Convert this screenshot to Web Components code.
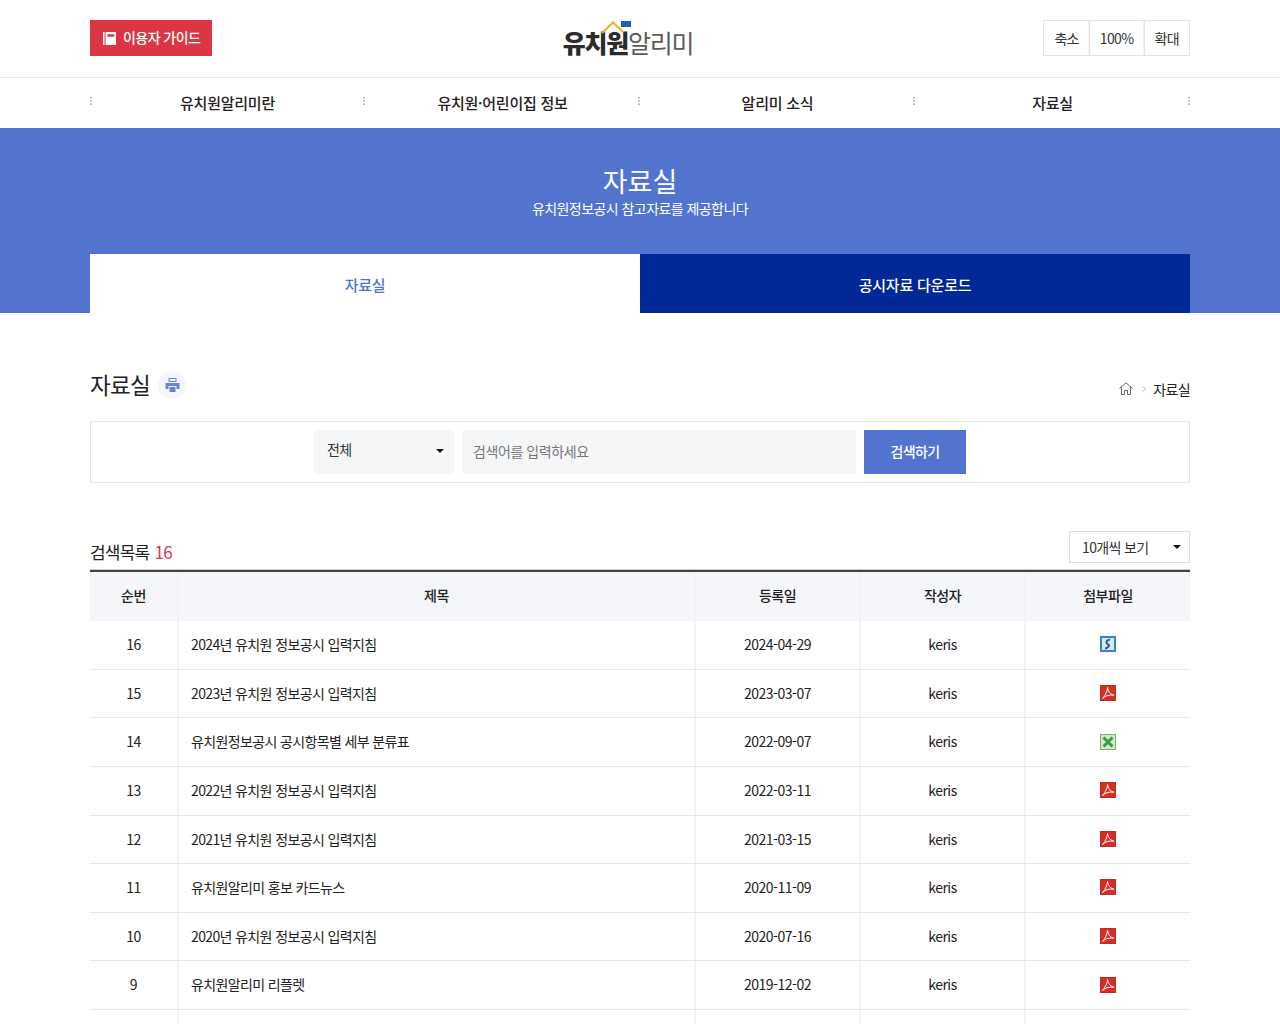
<!DOCTYPE html>
<html lang="ko"><head><meta charset="utf-8"><title>자료실</title>
<style>
html,body{margin:0;padding:0;background:#fff;color:#222;font-family:"Noto Sans CJK KR","Noto Sans",sans-serif;overflow:hidden;height:1024px}
</style></head><body>
<site-header></site-header>
<site-nav></site-nav>
<page-banner></page-banner>
<main-title></main-title>
<search-box></search-box>
<list-head></list-head>
<data-table></data-table>
<script>
const base=':host{display:block;box-sizing:border-box;letter-spacing:-.04em}*{box-sizing:border-box}';
function def(name,html){customElements.define(name,class extends HTMLElement{constructor(){super();this.attachShadow({mode:'open'}).innerHTML='<style>'+base+html[0]+'</style>'+html[1]}})}
def('site-header',[`
:host{height:78px;border-bottom:1px solid #e8e8e8;padding:20px 90px 0}
.w{display:grid;grid-template-columns:1fr auto 1fr;align-items:start}
.g{width:122px;height:36px;background:#dc3545;color:#fff;font-size:14px;display:flex;align-items:center;gap:7px;padding-left:13px;font-weight:500;letter-spacing:-.04em;line-height:35px}
.g span{margin-top:-1px}
.logo{position:relative;font-size:25px;line-height:36px;height:36px;margin:4px 24px 0 0;letter-spacing:-.05em;color:#5c5c5c;font-weight:400;white-space:nowrap}
.logo b{color:#2b2b2b;font-weight:900}
.logo svg{position:absolute;left:38px;top:-4px}
.z{justify-self:end;display:flex;height:36px;border:1px solid #e4e4e4;font-size:14px;line-height:35px;color:#333}
.z span{padding:0 10px;border-left:1px solid #e4e4e4;box-shadow:-1px 0 0 #f3f3f3}
.z span:first-child{border:0;box-shadow:none}
`,`<div class="w"><div class="g"><svg width="13" height="13" viewBox="0 0 12 12"><path fill="#fff" d="M0 0h1.400v12H0zM2.400 0H12v12H2.400zM4 2v2.400h6.400V2z"/></svg><span>이용자 가이드</span></div>
<div class="logo"><svg width="32" height="16" viewBox="0 0 32 16"><path d="M1 13 L12 2.500 L22 12" fill="none" stroke="#f0b429" stroke-width="2.200"/><path d="M20 1h10v6H20z" fill="#1f5fbf"/></svg><b>유치원</b>알리미</div>
<div class="z"><span>축소</span><span>100%</span><span>확대</span></div></div>`]);
def('site-nav',[`
:host{height:50px;padding:0 90px}
.n{display:grid;grid-template-columns:repeat(4,275px);height:50px;letter-spacing:-.015em}
.n a{position:relative;text-align:center;font-size:15px;font-weight:500;line-height:50px;color:#222}
.n a::before{content:"";position:absolute;left:-2px;top:18px;width:2px;height:10px;background:radial-gradient(circle,#bbb 0 .9px,transparent 1px) 0 0/2px 3.300px}
.n a:first-child::before{left:0}
.n a:last-child::after{content:"";position:absolute;right:0;top:18px;width:2px;height:10px;background:radial-gradient(circle,#bbb 0 .9px,transparent 1px) 0 0/2px 3.300px}
`,`<div class="n"><a>유치원알리미란</a><a>유치원·어린이집 정보</a><a>알리미 소식</a><a>자료실</a></div>`]);
def('page-banner',[`
:host{height:185px;background:#5274cf;color:#fff;text-align:center;padding-top:33px}
h1{margin:0;font-size:27px;font-weight:400;line-height:40px;letter-spacing:0}
p{margin:-5px 0 0;font-size:14px;line-height:24px;letter-spacing:-.04em}
.t{display:grid;grid-template-columns:550px 550px;grid-template-rows:59px;margin:34px 90px 0;height:59px;font-size:15px;font-weight:500;letter-spacing:-.015em}
.t a{display:flex;align-items:center;justify-content:center;padding-top:2px}
.t a:first-child{background:#fff;color:#5274cf}.t a:last-child{background:#002896;color:#fff}
`,`<h1>자료실</h1><p>유치원정보공시 참고자료를 제공합니다</p><div class="t"><a>자료실</a><a>공시자료 다운로드</a></div>`]);
def('main-title',[`
:host{margin:0 90px;height:108px;padding-top:52px;display:flex;justify-content:space-between}
.l{display:flex;align-items:flex-start;gap:8px}
h2{margin:0;font-size:22.500px;font-weight:400;line-height:38px;letter-spacing:-.03em;color:#222}
.p{width:28px;height:28px;border-radius:50%;background:#f4f6fb;display:flex;align-items:center;justify-content:center;margin-top:6px}
.b{display:flex;align-items:center;gap:7px;font-size:14px;height:20px;margin-top:14px;color:#222;align-self:flex-start}
.b i{color:#ccc;font:normal 14px "DejaVu Sans",sans-serif;margin-top:-2px}
.b svg{margin:-2px 1px 0 0}
`,`<div class="l"><h2>자료실</h2><div class="p"><svg width="15" height="14" viewBox="0 0 14 14"><path fill="#6c85cc" d="M3 0h8v4H3zM4 1v2h6V1zM0 5h14v6h-3V8H3v3H0zM4 9h6v5H4z"/></svg></div></div>
<div class="b"><svg width="14" height="13" viewBox="0 0 14 13" fill="none" stroke="#666" stroke-width="1"><path d="M.5 6.500 7 .8l6.500 5.700M2.500 5v7.500h3V8.500h3v4h3V5"/></svg><i>›</i><span>자료실</span></div>`]);
def('search-box',[`
:host{margin:0 90px;height:62px;border:1px solid #e4e4e4;padding-top:8px}
.r{display:flex;justify-content:center;gap:8px;height:44px}
.s{width:140px;background:#f4f6f7;border-radius:3px;font-size:14px;line-height:39px;padding-left:13px;color:#333;position:relative}
.s::after{content:"";position:absolute;right:10px;top:19px;border:4px solid transparent;border-top-color:#111;border-bottom:0}
.i{width:394px;background:#f4f6f7;border-radius:3px;font-size:14px;line-height:43px;padding-left:11px;color:#777;letter-spacing:-.03em}
.b{width:102px;background:#5274cf;color:#fff;font-size:14px;line-height:43px;text-align:center;font-weight:500}
`,`<div class="r"><div class="s">전체</div><div class="i">검색어를 입력하세요</div><div class="b">검색하기</div></div>`]);
def('list-head',[`
:host{margin:0 90px;height:87px;position:relative;padding-top:48px;display:flex;justify-content:space-between;align-items:flex-start}
.c{font-size:17px;line-height:44px;margin-top:-1px;color:#222;letter-spacing:-.045em}
.c em{font-style:normal;color:#dc3545;margin-left:1px}
.d{width:121px;height:32px;border:1px solid #ddd;font-size:14px;line-height:31px;padding-left:12px;position:relative;color:#333;background:#fff}
.d::after{content:"";position:absolute;right:8px;top:13px;border:4px solid transparent;border-top-color:#111;border-bottom:0}
`,`<div class="c">검색목록 <em>16</em></div><div class="d">10개씩 보기</div>`]);
const pdf='<svg width="16" height="16" viewBox="0 0 16 16"><rect width="16" height="16" fill="#d92c22"/><rect x=".5" y=".5" width="15" height="15" fill="none" stroke="#b0332a"/><path d="M7.600 2.500C8.200 6 9.500 9 14 10.200 10 9.500 5.500 10.500 2.500 13.500 5 11 7 7 7.600 2.500z" fill="none" stroke="#fff" stroke-width="1"/></svg>';
const xls='<svg width="16" height="16" viewBox="0 0 16 16"><rect width="16" height="16" fill="#d3e8c6"/><rect x=".5" y=".5" width="15" height="15" fill="none" stroke="#7fb06d"/><path d="M3.500 3.500l9 9m0-9l-9 9" stroke="#3c9a4a" stroke-width="3"/></svg>';
const hwp='<svg width="16" height="16" viewBox="0 0 16 16"><rect width="16" height="16" fill="#3b7fc4"/><rect x="2" y="2" width="12" height="12" fill="#dbeaf7"/><path d="M10 3.500C7 4 5.500 6 7 7.500S10 9 8.500 10.500 6 12.500 5 12.500" fill="none" stroke="#1d5fa8" stroke-width="2"/></svg>';
const rows=[['16','2024년 유치원 정보공시 입력지침','2024-04-29',hwp],['15','2023년 유치원 정보공시 입력지침','2023-03-07',pdf],['14','유치원정보공시 공시항목별 세부 분류표','2022-09-07',xls],['13','2022년 유치원 정보공시 입력지침','2022-03-11',pdf],['12','2021년 유치원 정보공시 입력지침','2021-03-15',pdf],['11','유치원알리미 홍보 카드뉴스','2020-11-09',pdf],['10','2020년 유치원 정보공시 입력지침','2020-07-16',pdf],['9','유치원알리미 리플렛','2019-12-02',pdf]];
def('data-table',[`
:host{margin:0 90px;border-top:2px solid #444;box-shadow:0 -1px 0 #ccc}
.h,.r{display:grid;grid-template-columns:89px 517px 165px 165px 164px;font-size:14px;text-align:center;color:#222}
.h{height:49.200px;background:#f4f6fa;line-height:47px;font-weight:500}
.r{height:48.620px;line-height:47px;border-bottom:1px solid #e9e9e9}
.h div:not(:last-child),.r div:not(:last-child){border-right:2px solid #f1f2f4}
.r .t{text-align:left;padding-left:12px;letter-spacing:-.045em}
.r svg{vertical-align:middle;margin-top:-4px}
.h div,.r div{letter-spacing:-.035em}
.r .t{letter-spacing:-.045em}
`,`<div class="h"><div>순번</div><div>제목</div><div>등록일</div><div>작성자</div><div>첨부파일</div></div>`+rows.map(r=>`<div class="r"><div>${r[0]}</div><div class="t">${r[1]}</div><div>${r[2]}</div><div>keris</div><div>${r[3]}</div></div>`).join('')+`<div class="r"><div></div><div></div><div></div><div></div><div></div></div>`]);
</script>
</body></html>
